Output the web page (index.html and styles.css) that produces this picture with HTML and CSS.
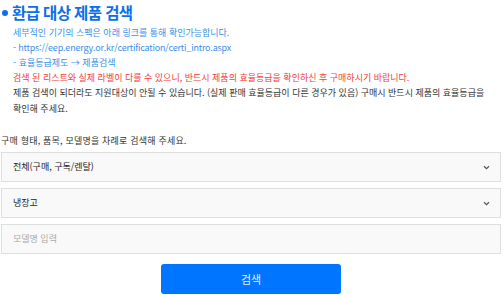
FILE: index.html
```html
<!DOCTYPE html>
<html lang="ko">
<head>
  <meta charset="utf-8" />
  <title>환급 대상 제품 검색</title>
  <meta name="viewport" content="width=device-width, initial-scale=1.0">
  <link rel="stylesheet" href="styles.css">
</head>
<body>
  <div class="page">
    <h1 class="title"><span class="dot"></span>환급 대상 제품 검색</h1>
    <div class="notes">
      <p class="blue">세부적인 기기의 스펙은 아래 링크를 통해 확인가능합니다.</p>
      <p class="blue url">- https://eep.energy.or.kr/certification/certi_intro.aspx</p>
      <p class="blue">- 효율등급제도 → 제품검색</p>
      <p class="red">검색 된 리스트와 실제 라벨이 다를 수 있으니, 반드시 제품의 효율등급을 확인하신 후 구매하시기 바랍니다.</p>
      <p class="dark">제품 검색이 되더라도 지원대상이 안될 수 있습니다. (실제 판매 효율등급이 다른 경우가 있음) 구매시 반드시 제품의 효율등급을 확인해 주세요.</p>
    </div>
    <p class="lead">구매 형태, 품목, 모델명을 차례로 검색해 주세요.</p>
    <form class="search">
      <div class="field">
        <select>
          <option>전체(구매, 구독/렌탈)</option>
        </select>
        <svg class="chev" width="7" height="5" viewBox="0 0 7 5"><path d="M1 1.2 L3.5 3.6 L6 1.2" fill="none" stroke="#555" stroke-width="1.2"/></svg>
      </div>
      <div class="field">
        <select>
          <option>냉장고</option>
        </select>
        <svg class="chev" width="7" height="5" viewBox="0 0 7 5"><path d="M1 1.2 L3.5 3.6 L6 1.2" fill="none" stroke="#555" stroke-width="1.2"/></svg>
      </div>
      <div class="field">
        <input type="text" placeholder="모델명 입력" />
      </div>
      <button type="submit">검색</button>
    </form>
  </div>
</body>
</html>
```

FILE: styles.css
```css
:root {
  --blue: #0a6fe8;
  --link: #3b8fe8;
  --red: #f23b3b;
  --text: #333;
  --border: #dedede;
  --field: #f9f9f9;
}
html, body {
  margin: 0;
  padding: 0;
  background: #fff;
  color: var(--text);
  font-family: "Noto Sans CJK KR", "Noto Sans", sans-serif;
}
.page {
  width: 500px;
  padding: 0 3px 0 1px;
}
.title {
  display: flex;
  align-items: center;
  height: 24px;
  margin: 0;
  font-size: 15.5px;
  font-weight: 700;
  letter-spacing: -0.6px;
  color: var(--blue);
  line-height: 24px;
}
.dot {
  width: 6px;
  height: 6px;
  border-radius: 50%;
  background: var(--blue);
  margin: 1px 4px 0 1px;
}
.notes {
  padding: 0 10px 0 12px;
  margin-top: 0.5px;
}
.notes p, .lead {
  margin: 0;
  font-size: 9px;
  line-height: 15.2px;
  letter-spacing: 0;
}
.notes .url {
  letter-spacing: -0.2px;
}
.blue { color: var(--link); }
.red { color: var(--red); }
.dark { color: var(--text); }
.lead {
  margin-top: 17px !important;
  letter-spacing: 0.2px !important;
}
.search {
  display: flex;
  flex-direction: column;
  gap: 6px;
  margin-top: 4px;
}
.field {
  position: relative;
}
select, input {
  display: block;
  width: 100%;
  height: 30px;
  box-sizing: border-box;
  margin: 0;
  padding: 0 11px;
  border: 1px solid var(--border);
  border-radius: 0;
  background: var(--field);
  font-family: inherit;
  font-size: 9px;
  letter-spacing: 0;
  color: #222;
  appearance: none;
  -webkit-appearance: none;
  outline: none;
}
input::placeholder {
  color: #aaa;
}
.chev {
  position: absolute;
  right: 11px;
  top: 13px;
  pointer-events: none;
}
button {
  align-self: center;
  width: 180px;
  height: 30px;
  margin-top: 4px;
  border: none;
  border-radius: 3px;
  background: #0075ff;
  color: #e8f1ff;
  font-family: inherit;
  font-size: 11px;
  cursor: pointer;
}
```
